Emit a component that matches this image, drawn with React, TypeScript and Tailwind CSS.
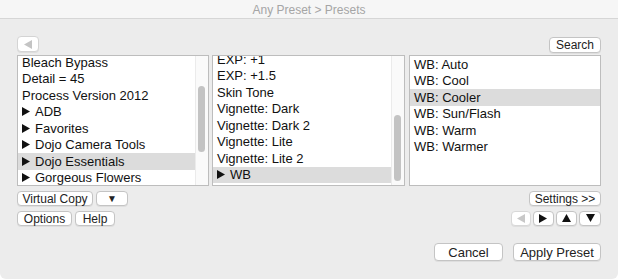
import React from 'react';

const font = { fontFamily: '"Liberation Sans", Arial, sans-serif' };

function Tri({ dir = 'right', color = '#111' }: { dir?: 'right' | 'left' | 'up' | 'down'; color?: string }) {
  const pts: Record<string, string> = {
    right: '0,0 8,4.5 0,9',
    left: '8,0 0,4.5 8,9',
    up: '0,8 4.5,0 9,8',
    down: '0,0 9,0 4.5,8',
  };
  return (
    <svg width="9" height="9" viewBox="0 0 9 9" className="shrink-0">
      <polygon points={pts[dir]} fill={color} />
    </svg>
  );
}

function Btn({ children, className = '' }: { children: React.ReactNode; className?: string }) {
  return (
    <div
      className={`flex items-center justify-center bg-white border border-[#c4c4c4] rounded-[4px] shadow-[0_1px_0_rgba(0,0,0,0.06)] text-[12px] text-[#222] leading-none ${className}`}
    >
      {children}
    </div>
  );
}

type Row = { label: string; folder?: boolean; selected?: boolean };

function List({
  rows,
  offset,
  thumb,
  className = '',
}: {
  rows: Row[];
  offset: string;
  thumb?: string;
  className?: string;
}) {
  return (
    <div className={`relative h-[131px] bg-white border border-[#bdbdbd] overflow-hidden flex ${className}`}>
      <div className={`flex-1 flex flex-col ${offset}`}>
        {rows.map((r) => (
          <div
            key={r.label}
            className={`h-[16.5px] shrink-0 flex items-center gap-[4px] pl-[4px] text-[13px] text-[#111] whitespace-nowrap ${r.selected ? 'bg-[#dcdcdc]' : ''}`}
          >
            {r.folder && <Tri />}
            <span>{r.label}</span>
          </div>
        ))}
      </div>
      {thumb && (
        <div className="w-[13px] shrink-0 bg-[#fafafa] border-l border-[#ebebeb] relative">
          <div className={`absolute left-[2px] w-[7px] rounded-full bg-[#c3c3c3] ${thumb}`} />
        </div>
      )}
    </div>
  );
}

export default function App() {
  const left: Row[] = [
    { label: 'Bleach Bypass' },
    { label: 'Detail = 45' },
    { label: 'Process Version 2012' },
    { label: 'ADB', folder: true },
    { label: 'Favorites', folder: true },
    { label: 'Dojo Camera Tools', folder: true },
    { label: 'Dojo Essentials', folder: true, selected: true },
    { label: 'Gorgeous Flowers', folder: true },
  ];
  const middle: Row[] = [
    { label: 'EXP: +1' },
    { label: 'EXP: +1.5' },
    { label: 'Skin Tone' },
    { label: 'Vignette: Dark' },
    { label: 'Vignette: Dark 2' },
    { label: 'Vignette: Lite' },
    { label: 'Vignette: Lite 2' },
    { label: 'WB', folder: true, selected: true },
  ];
  const right: Row[] = [
    { label: 'WB: Auto' },
    { label: 'WB: Cool' },
    { label: 'WB: Cooler', selected: true },
    { label: 'WB: Sun/Flash' },
    { label: 'WB: Warm' },
    { label: 'WB: Warmer' },
  ];

  return (
    <div className="w-[618px] h-[279px] bg-white" style={font}>
      <div className="w-full h-full bg-[#ececec] rounded-b-[6px] flex flex-col overflow-hidden">
        <div className="h-[19px] shrink-0 bg-[#f6f6f6] border-b border-[#d6d6d6] flex items-center justify-center pt-[2px] text-[12px] text-[#a5a5a5]">
          Any Preset &gt; Presets
        </div>

        <div className="flex flex-col px-[17px] pt-[17px]">
          <div className="flex items-start justify-between h-[19px]">
            <Btn className="w-[22px] h-[16px] border-[#d4d4d4]">
              <Tri dir="left" color="#c4c4c4" />
            </Btn>
            <Btn className="w-[52px] h-[16px] mt-[1px]">Search</Btn>
          </div>

          <div className="flex">
            <List rows={left} offset="-mt-[2px]" thumb="top-[30px] h-[66px]" className="w-[192px]" />
            <List rows={middle} offset="-mt-[5px]" thumb="top-[59px] h-[66px]" className="w-[193px] ml-[3px]" />
            <List rows={right} offset="mt-0" className="w-[192px] ml-[4px]" />
          </div>

          <div className="flex justify-between mt-[5px]">
            <div className="flex flex-col gap-[5px]">
              <div className="flex gap-[3px]">
                <Btn className="w-[76px] h-[15px]">Virtual Copy</Btn>
                <Btn className="w-[32px] h-[15px]">
                  <span className="text-[10px]">▼</span>
                </Btn>
              </div>
              <div className="flex gap-[3px]">
                <Btn className="w-[55px] h-[15px]">Options</Btn>
                <Btn className="w-[40px] h-[15px]">Help</Btn>
              </div>
            </div>
            <div className="flex flex-col items-end gap-[5px]">
              <Btn className="w-[72px] h-[15px]">Settings &gt;&gt;</Btn>
              <div className="flex gap-[2px]">
                <Btn className="w-[20px] h-[15px] border-[#d8d8d8]">
                  <Tri dir="left" color="#c8c8c8" />
                </Btn>
                <Btn className="w-[21px] h-[15px]">
                  <Tri dir="right" />
                </Btn>
                <Btn className="w-[21px] h-[15px]">
                  <Tri dir="up" />
                </Btn>
                <Btn className="w-[22px] h-[15px]">
                  <Tri dir="down" />
                </Btn>
              </div>
            </div>
          </div>

          <div className="flex justify-end gap-[10px] mt-[17px]">
            <Btn className="w-[69px] h-[18px] text-[13px]">Cancel</Btn>
            <Btn className="w-[88px] h-[18px] text-[13px]">Apply Preset</Btn>
          </div>
        </div>
      </div>
    </div>
  );
}
